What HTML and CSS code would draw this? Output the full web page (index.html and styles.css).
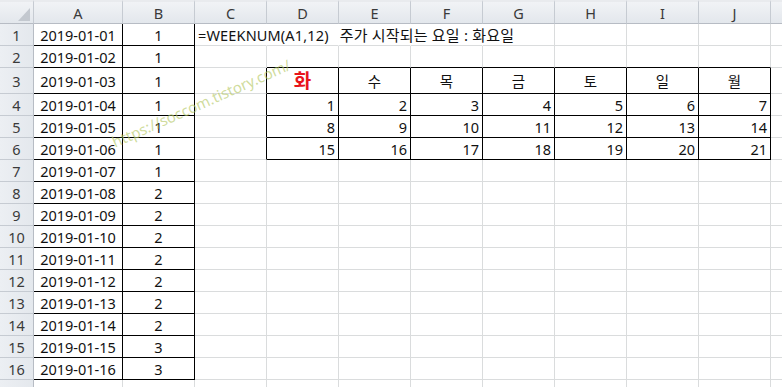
FILE: index.html
```html
<!DOCTYPE html>
<html lang="ko">
<head>
<meta charset="utf-8">
<title>WEEKNUM</title>
<link rel="stylesheet" href="styles.css">
</head>
<body>
<div class="sheet">
<table class="grid">
<colgroup><col class="c-rh"><col class="c-a"><col class="c-n" span="11"></colgroup>
<tr class="hd"><th class="corner"><svg width="12" height="13" viewBox="0 0 12 13"><polygon points="12,0 12,13 0,13" fill="#c3c8cf"/></svg></th><th>A</th><th>B</th><th>C</th><th>D</th><th>E</th><th>F</th><th>G</th><th>H</th><th>I</th><th>J</th><th class="k"></th></tr>
<tr><th class="rn">1</th><td class="d">2019-01-01</td><td class="d">1</td><td class="f nr">=WEEKNUM(A1,12)<span class="ko">주가 시작되는 요일 : 화요일</span></td><td class="nr"></td><td class="nr"></td><td class="nr"></td><td></td><td></td><td></td><td></td><td></td></tr>
<tr><th class="rn">2</th><td class="d">2019-01-02</td><td class="d">1</td><td></td><td class="tb"></td><td class="tb"></td><td class="tb"></td><td class="tb"></td><td class="tb"></td><td class="tb"></td><td class="tb"></td><td></td></tr>
<tr class="tall"><th class="rn">3</th><td class="d">2019-01-03</td><td class="d">1</td><td class="tl"></td><td class="t h red">화</td><td class="t h">수</td><td class="t h">목</td><td class="t h">금</td><td class="t h">토</td><td class="t h">일</td><td class="t h">월</td><td></td></tr>
<tr><th class="rn">4</th><td class="d">2019-01-04</td><td class="d">1</td><td class="tl"></td><td class="t n">1</td><td class="t n">2</td><td class="t n">3</td><td class="t n">4</td><td class="t n">5</td><td class="t n">6</td><td class="t n">7</td><td></td></tr>
<tr><th class="rn">5</th><td class="d">2019-01-05</td><td class="d">1</td><td class="tl"></td><td class="t n">8</td><td class="t n">9</td><td class="t n">10</td><td class="t n">11</td><td class="t n">12</td><td class="t n">13</td><td class="t n">14</td><td></td></tr>
<tr><th class="rn">6</th><td class="d">2019-01-06</td><td class="d">1</td><td class="tl"></td><td class="t n">15</td><td class="t n">16</td><td class="t n">17</td><td class="t n">18</td><td class="t n">19</td><td class="t n">20</td><td class="t n">21</td><td></td></tr>
<tr><th class="rn">7</th><td class="d">2019-01-07</td><td class="d">1</td><td></td><td></td><td></td><td></td><td></td><td></td><td></td><td></td><td></td></tr>
<tr><th class="rn">8</th><td class="d">2019-01-08</td><td class="d">2</td><td></td><td></td><td></td><td></td><td></td><td></td><td></td><td></td><td></td></tr>
<tr><th class="rn">9</th><td class="d">2019-01-09</td><td class="d">2</td><td></td><td></td><td></td><td></td><td></td><td></td><td></td><td></td><td></td></tr>
<tr><th class="rn">10</th><td class="d">2019-01-10</td><td class="d">2</td><td></td><td></td><td></td><td></td><td></td><td></td><td></td><td></td><td></td></tr>
<tr><th class="rn">11</th><td class="d">2019-01-11</td><td class="d">2</td><td></td><td></td><td></td><td></td><td></td><td></td><td></td><td></td><td></td></tr>
<tr><th class="rn">12</th><td class="d">2019-01-12</td><td class="d">2</td><td></td><td></td><td></td><td></td><td></td><td></td><td></td><td></td><td></td></tr>
<tr><th class="rn">13</th><td class="d">2019-01-13</td><td class="d">2</td><td></td><td></td><td></td><td></td><td></td><td></td><td></td><td></td><td></td></tr>
<tr><th class="rn">14</th><td class="d">2019-01-14</td><td class="d">2</td><td></td><td></td><td></td><td></td><td></td><td></td><td></td><td></td><td></td></tr>
<tr><th class="rn">15</th><td class="d">2019-01-15</td><td class="d">3</td><td></td><td></td><td></td><td></td><td></td><td></td><td></td><td></td><td></td></tr>
<tr><th class="rn">16</th><td class="d">2019-01-16</td><td class="d">3</td><td></td><td></td><td></td><td></td><td></td><td></td><td></td><td></td><td></td></tr>
<tr><th class="rn">17</th><td></td><td></td><td></td><td></td><td></td><td></td><td></td><td></td><td></td><td></td><td></td></tr>
</table>
<span class="mark">https://soccom.tistory.com/</span>
</div>
</body>
</html>
```
FILE: styles.css
```css
html, body {
  margin: 0;
  padding: 0;
  background: #fff;
}
body {
  font-family: "Noto Sans", "Noto Sans CJK KR", sans-serif;
  font-size: 14.5px;
  color: #111;
  overflow: hidden;
}
.sheet {
  position: relative;
  width: 782px;
  height: 387px;
  overflow: hidden;
}
.grid {
  table-layout: fixed;
  border-collapse: separate;
  border-spacing: 0;
  width: 915px;
}
.c-rh { width: 34px; }
.c-a { width: 89px; }
.c-n { width: 72px; }
th, td {
  box-sizing: border-box;
  padding: 0;
  white-space: nowrap;
  line-height: 20px;
  vertical-align: middle;
  text-align: center;
  font-weight: normal;
}
td {
  border-right: 1px solid #dadcdd;
  border-bottom: 1px solid #dadcdd;
}
tr { height: 22px; }
tr.hd { height: 24px; }
tr.tall { height: 26px; }
.hd th {
  background: linear-gradient(#f1f3f6, #e3e7ec);
  border-top: 2px solid #e9ebee;
  border-right: 1px solid #c6cbd2;
  border-bottom: 1px solid #b7bcc4;
  color: #3a3a3a;
  font-size: 14.5px;
}
.hd th.corner {
  text-align: right;
  vertical-align: bottom;
  padding: 0 3px 2px 0;
  line-height: 0;
}
.rn {
  background: linear-gradient(90deg, #eceff3, #e4e8ed);
  border-right: 1px solid #b7bcc4;
  border-bottom: 1px solid #c6cbd2;
  color: #3a3a3a;
}
td.d {
  border-right-color: #000;
  border-bottom-color: #000;
}
td.f {
  text-align: left;
  padding-left: 3px;
  overflow: visible;
  letter-spacing: 0.15px;
}
.ko {
  margin-left: 11px;
  font-size: 15px;
  letter-spacing: 0.2px;
}
td.nr { border-right-color: #fff; }
td.tb { border-bottom-color: #000; }
td.tl { border-right-color: #000; }
td.t {
  border-right-color: #000;
  border-bottom-color: #000;
}
td.n {
  text-align: right;
  padding-right: 3px;
}
td.h { font-size: 14.5px; }
td.red {
  color: #e8141b;
  font-weight: bold;
  font-size: 19px;
}
.mark {
  position: absolute;
  left: 201px;
  top: 103px;
  transform: translate(-50%, -50%) rotate(-24deg);
  font-family: "Noto Sans", sans-serif;
  font-size: 15px;
  color: rgba(180, 200, 100, 0.65);
  white-space: nowrap;
}
```
